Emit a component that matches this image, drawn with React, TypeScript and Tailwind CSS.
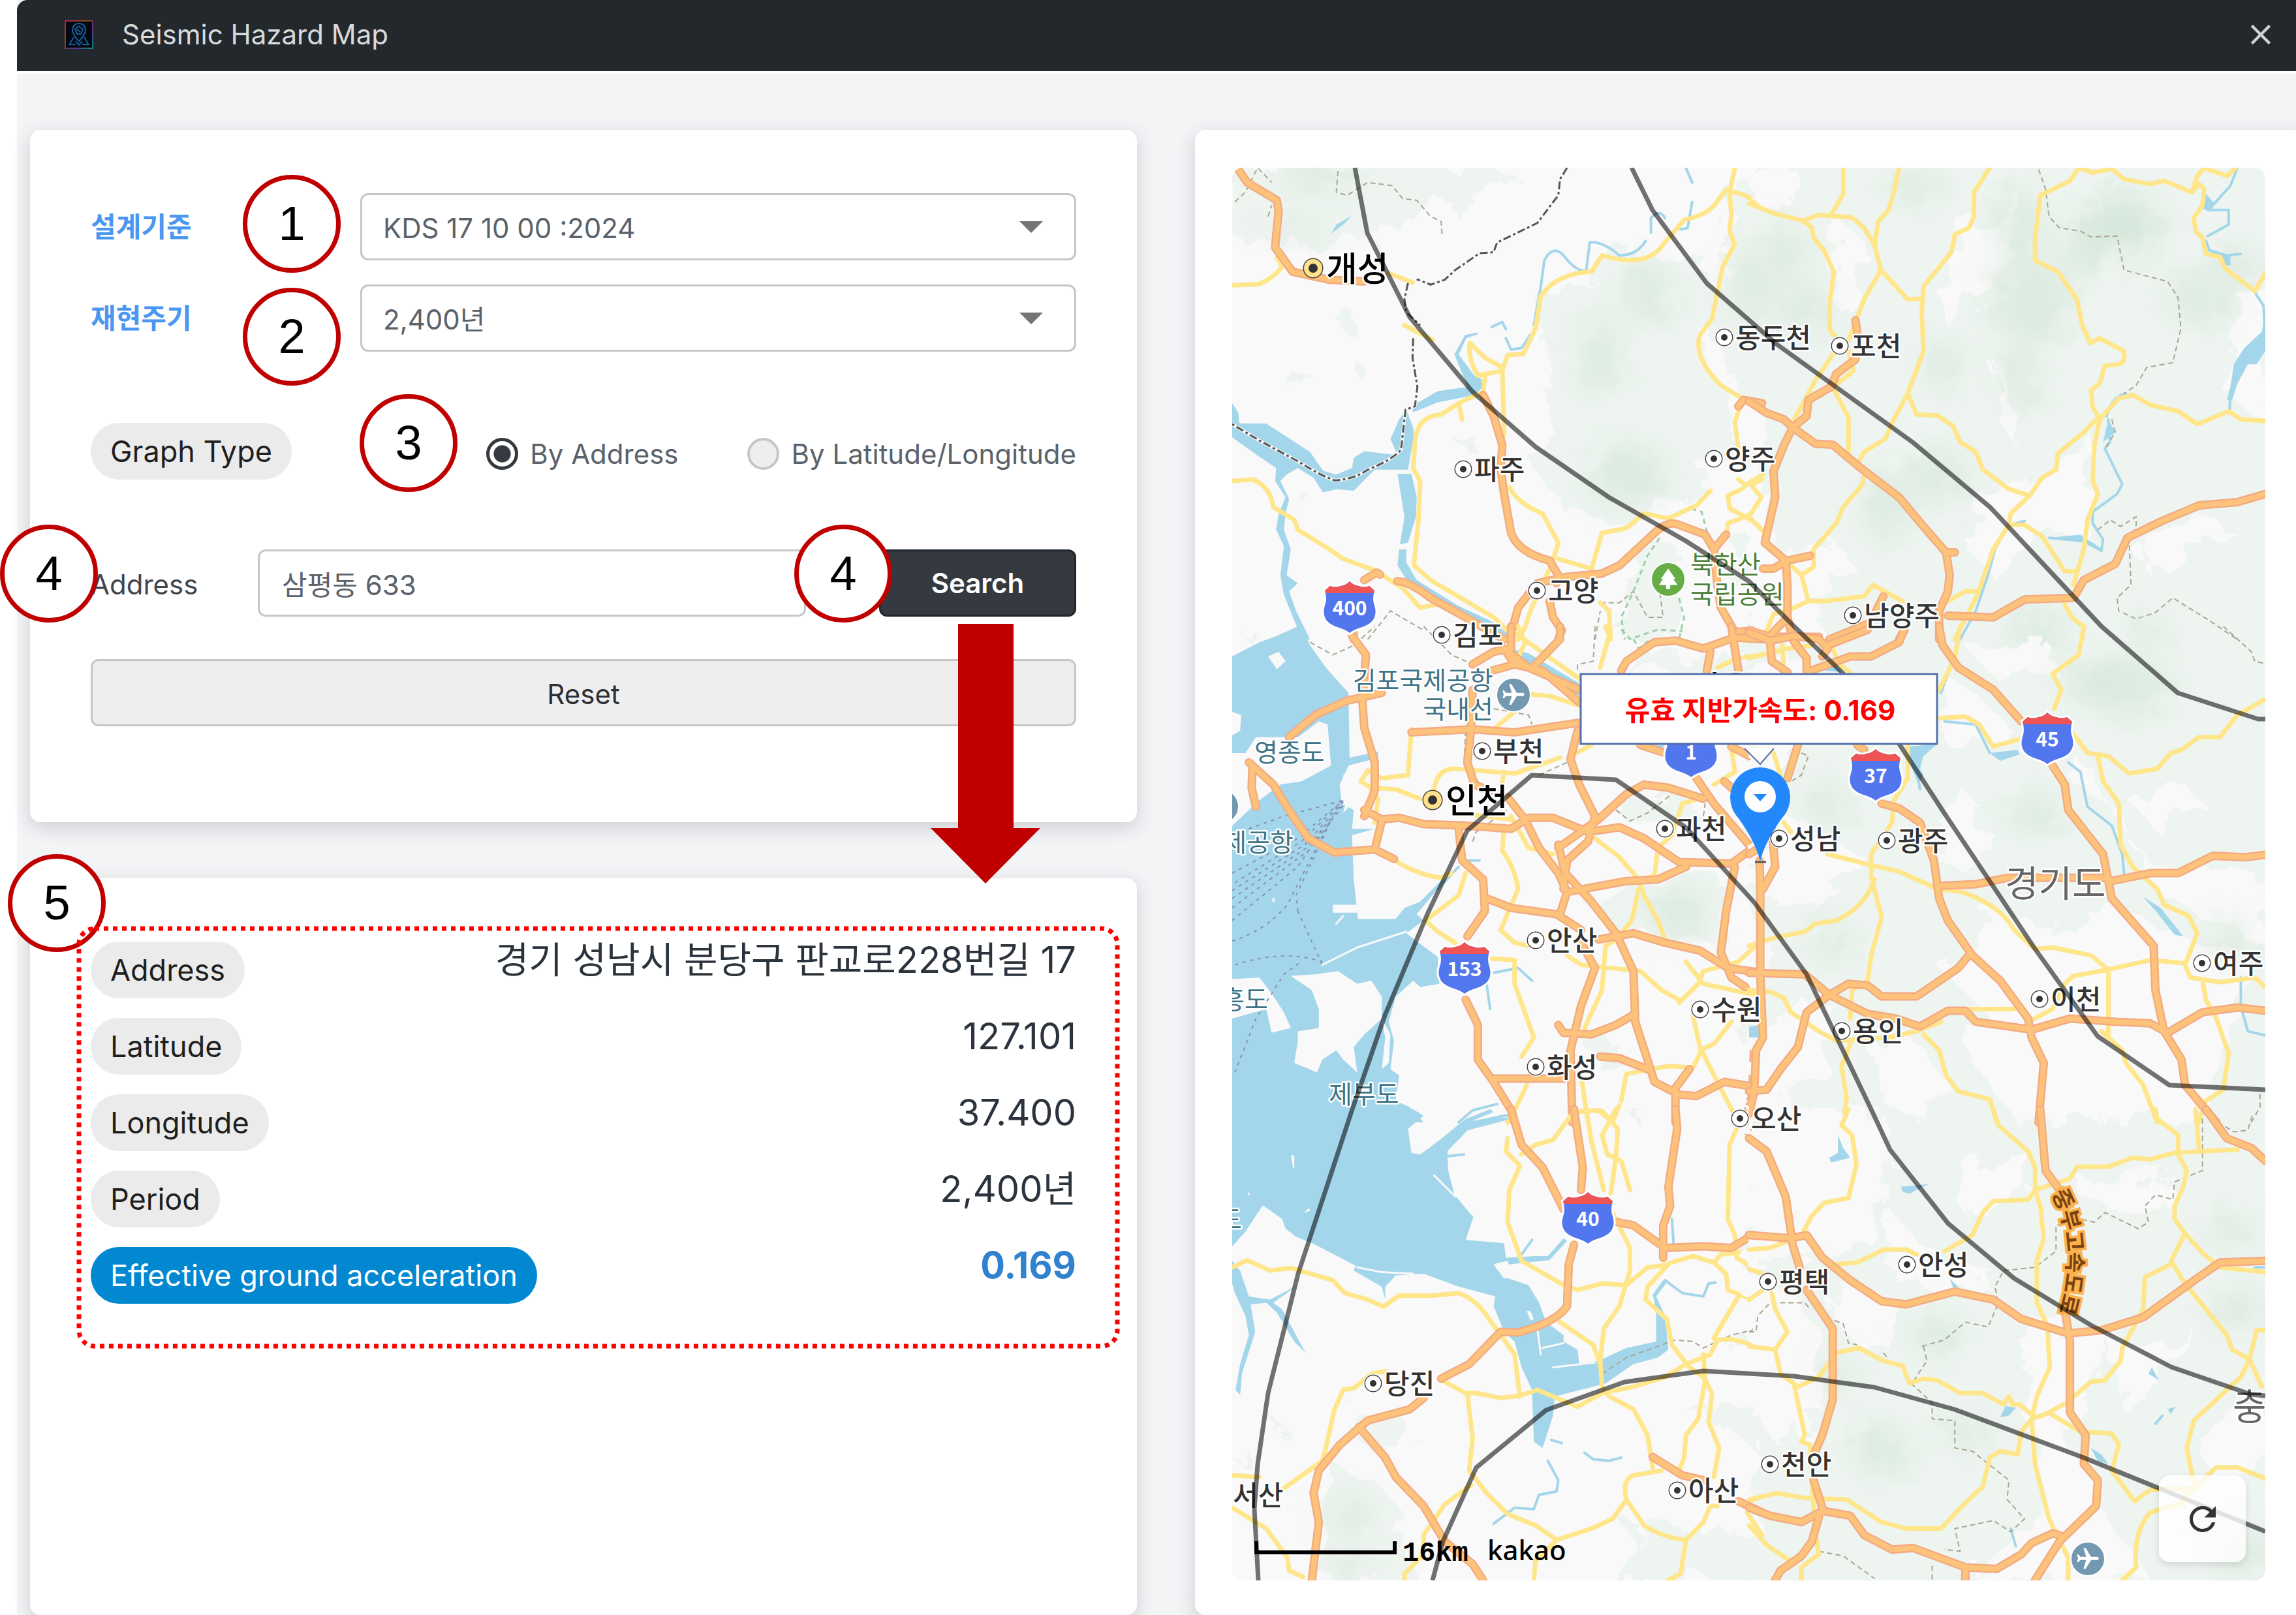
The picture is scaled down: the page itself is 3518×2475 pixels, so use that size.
import React, { useState } from 'react';
import { MdClose, MdFlight, MdPark, MdRefresh } from 'react-icons/md';

const SANS = "font-['Inter','Noto_Sans_CJK_KR',sans-serif]";

type TileData = {
  x: number;
  y: number;
  sx: number;
  sy: number;
  base?: string;
  green?: string;
  light?: string;
  hills?: number[][];
  water: string;
  land?: string;
  streams?: string;
  causeways?: string;
  ferries?: string;
  borders?: string;
  limits?: string;
  parks?: string;
  minor: string;
  major: string;
};

// Every tile is drawn on its own 1568 x 1568 grid
const TILES: TileData[] = [
  {
    x: -28,
    y: -57,
    sx: 0.5357,
    sy: 0.4974,
    green:
      'M52 115H850L800 200L640 230L600 270L480 290L440 330L330 350L180 340L52 330Z M920 510L1060 470L1170 360L1280 400L1400 380L1440 520L1390 700L1450 800L1500 950L1400 1080L1180 1200L1000 1170L900 1000L960 900L940 700Z M1500 115H1568V800L1480 760L1430 620Z M340 520L380 540V610L350 600Z M220 740L290 760L240 820Z M400 700L440 740L430 780L400 740Z M1200 1300L1330 1290L1340 1568H1170Z M1480 1230H1568V1500L1500 1400Z M690 960L760 950L740 990Z M240 1110L270 1120L260 1170Z',
    hills: [[310, 140, 110, 50], [1240, 500, 70, 90], [1180, 1060, 110, 100], [1100, 700, 60, 120], [1530, 480, 50, 120], [230, 310, 90, 30]],
    water:
      'M52 840L70 870L72 902L150 903L275 990L312 1048L350 1060L395 1040L400 1008L430 988L525 1000L505 950L530 890L550 860L570 915L572 940L555 1045L460 1045L400 1110L350 1105L312 1115L285 1070L240 1040L208 1060L190 1080L215 1135L205 1180L200 1230L220 1290L208 1370L240 1395L215 1420L235 1480L275 1568H190L245 1550L200 1430L190 1370L200 1280L178 1230L185 1180L205 1130L175 1080L178 1040L130 1005L52 945Z M570 868L640 838L745 815L770 790L765 765L745 755L700 690L722 640L755 628V622L718 630L688 690L725 790L640 803L565 850Z M525 1058H565L580 1130L578 1190L555 1270L532 1275L545 1190Z M530 1290H550V1330L580 1385L700 1465L800 1515L860 1568H815L700 1490L560 1400L525 1340Z M335 318L350 290L395 262L370 290Z',
    streams:
      'M795 605L825 590L835 612M835 640L850 675L880 670L905 630M915 600L935 480L945 400Q970 350 1000 385Q1040 440 1065 430L1075 345Q1110 340 1160 385Q1210 385 1235 340M1250 315V270Q1275 240 1290 270M1335 305L1355 300L1368 220M1350 115L1368 160',
    borders:
      'M1010 115L990 150L985 200L960 235L925 285L810 345L800 375L760 378L690 430L660 460L620 475L580 458M555 470L545 520L550 560L590 600M570 640L568 700L582 790L575 850L548 860L535 985Q500 1020 440 1045Q400 1075 345 1078Q300 1060 250 1025L130 955L52 905',
    limits:
      'M355 125L350 190L380 200L440 160L510 170L540 210L580 215L620 265L650 280L653 330M60 220L90 190L125 115L165 160M155 265L165 230M1105 1455L1160 1455L1200 1420L1240 1500L1285 1500L1275 1420M440 1568L505 1480L600 1540M1090 1568L1105 1480',
    parks: 'M1275 1255L1240 1310L1200 1420L1165 1500L1175 1568M1365 1165L1395 1175L1410 1235M1330 1440L1345 1500L1330 1568',
    minor:
      'M52 477L130 473Q170 455 195 420L180 390M500 440L568 468M545 600L625 645M52 1080L110 1075Q160 1095 170 1160L230 1200L240 1230L330 1290L370 1320L460 1355L540 1410L590 1470L640 1460M1568 230L1520 200L1465 183L1445 210Q1420 260 1345 275L1270 370Q1220 420 1110 385L1080 435Q980 440 935 510L920 610L885 688L840 692L825 740L755 755Q725 700 732 655L775 700L825 730M825 740L830 930L820 990M775 760L770 805L700 840L650 875Q580 880 575 960L570 1040L590 1080L585 1200L572 1340L620 1385L800 1500L840 1540M700 840L710 890M1490 115L1475 190L1480 260L1475 310L1490 350L1455 420L1440 500L1425 580L1390 630Q1370 700 1450 785L1510 825M1505 850L1490 900L1500 980M845 1100Q870 1150 940 1180L985 1270L965 1340L930 1420L905 1480L890 1530L870 1568M985 1320L1080 1350L1110 1240L1180 1225L1230 1180L1300 1195L1380 1155L1420 1110M1500 1075L1530 1100L1568 1130M1568 1075L1470 1125L1475 1165L1520 1190L1568 1230M1520 1190L1470 1210L1465 1250M1568 1160L1520 1190M1105 1455L1130 1480L1135 1568',
    major:
      'M70 120L95 160L180 215L185 250L175 360L225 435L330 460L430 465M770 815L800 880L825 970L820 1040L830 1120L850 1240Q870 1300 960 1325L985 1370L980 1395M430 1385L465 1362L475 1368M525 1388Q560 1390 620 1440L720 1500L830 1568M845 1568L870 1470L925 1395L1010 1375L1110 1365L1160 1340L1260 1240Q1300 1200 1330 1215L1405 1245L1430 1290L1465 1245M960 1450L970 1500L995 1540L985 1568M1430 1290L1440 1400L1450 1470L1490 1545L1568 1540M1500 850L1515 830L1568 840M400 1550V1568',
  },
  {
    x: 792,
    y: -57,
    sx: 0.5344,
    sy: 0.4974,
    base: '#eef4f0',
    light:
      'M0 115H130L90 200L60 250L0 200Z M240 260L330 340L300 480L250 560L240 400Z M0 980L40 1150L90 1300L230 1250L300 1350L200 1400V1568H0Z M640 1140L740 1090L900 1060L960 900L990 1000L960 1250L800 1230L720 1400L640 1300Z M1130 1230L1290 1190L1400 1240L1250 1330L1130 1360Z M640 300L800 200L700 480L560 600L520 480Z M1400 500L1480 480V900L1380 820Z M700 700L790 1000L720 900Z',
    hills: [[770, 300, 70, 130], [810, 530, 120, 120], [1070, 290, 120, 90], [1050, 270, 70, 60], [960, 370, 80, 70], [560, 720, 60, 70], [390, 1160, 60, 110], [540, 1070, 90, 80], [160, 550, 70, 80], [780, 760, 50, 110], [480, 170, 70, 60], [1290, 520, 90, 70], [1400, 420, 70, 60], [830, 1540, 90, 60], [100, 380, 60, 90]],
    water:
      'M1305 190L1335 225L1320 250L1300 240Z M1480 560L1470 620L1420 670L1390 720L1380 790L1370 830H1385L1400 780L1430 720L1455 720L1480 680Z M1320 365L1380 385V415H1360Z M860 1255L950 1245L1020 1295L960 1270Z M1015 960L1030 890L1050 930Z',
    streams:
      'M1400 115L1380 170L1330 230L1320 245H1375V290L1315 325M1310 340L1320 370L1370 385L1410 380M1445 490L1475 540L1478 600M1380 800L1378 860M1025 880Q1040 820 1080 810M1030 890L1035 960L1020 980L1070 1090L1055 1120L985 1175V1210L1015 1260L1010 1295L960 1265L860 1255M765 1210L790 1203M745 1215L705 1290L685 1370L650 1480L605 1568',
    limits:
      'M830 120L850 180L860 265L890 300L950 310L980 328L1055 325L1075 430L1200 465L1230 515L1238 610L1215 715L1140 730L1110 785L1075 810M1040 890L1050 930L1020 980M1000 1230L1035 1200L1065 1220L1110 1190V1215L1090 1270L1095 1400L1055 1440L1060 1480L1110 1505L1165 1485L1215 1440L1320 1510L1400 1568',
    minor:
      'M0 225L70 255L155 278L200 260L295 268L330 300L360 355L378 430L455 520L495 518M270 115V195L235 260M430 115L415 190L400 245L370 280L360 355M155 278L180 300L185 330L215 370L243 435L230 540L232 615L255 645L240 690L190 770L130 890M378 430L330 520L305 590L280 660L300 740L240 790L285 885V990M690 115L645 190V265L630 300L590 320L580 375L500 480L495 560L500 680L455 810L415 890L390 950L330 990L310 1030M455 810L480 875L540 878L585 910L605 960L650 990L670 1045L745 1105L805 1125M1000 885L960 930L885 995L880 1045L840 1070L805 1125L750 1180L745 1215L700 1290L655 1430L590 1568M945 115L920 155L835 200L820 330V400L885 435L940 520L955 600L978 655L1005 640L1075 680Q1080 715 1060 720L1020 725L1005 780L980 800L985 850L1005 890M945 115L985 130L1040 118L1075 150L1150 165L1190 155L1270 190L1290 165L1305 180L1300 230L1275 270L1280 310L1300 330L1310 380L1350 390L1365 425L1450 495L1480 440M1270 190L1285 140L1305 115L1370 140L1395 115M1005 890L1060 825L1100 815L1150 845L1230 865L1285 905L1375 865L1410 890L1480 895M1005 890L990 970L985 1080L1000 1120L970 1200L960 1290L930 1400M745 1215H790L840 1250L905 1358H935M905 1460L925 1500L960 1530L955 1568M330 1060L325 1090L270 1160L250 1210L185 1290V1345L150 1370L170 1450H220L330 1435L355 1400L440 1450M570 1450L620 1420H655M40 1060L0 1085L35 1130L0 1190L45 1240M170 1450L120 1475L70 1490L40 1568M105 1325L150 1370',
    major:
      'M0 835L50 870L100 890L125 915L190 965L240 968L320 1040L430 1130L500 1220L565 1300L575 1370L570 1420L545 1480V1568M305 585L310 620M305 705L250 750L235 790L170 830L165 880L125 915L100 970L70 1050L75 1130L60 1200L45 1270L105 1325L110 1400V1500L50 1568M40 1350H70L110 1325L175 1310M110 1500L125 1568M570 1300H590M570 1495L700 1500L790 1445L930 1440L960 1385L1050 1335L1085 1255L1180 1205L1290 1155L1400 1145L1480 1120M0 1540L60 1560H200M230 1568L340 1520M360 1490L385 1435M430 1568L445 1540',
  },
  {
    x: -28,
    y: 703,
    sx: 0.5357,
    sy: 0.4847,
    green:
      'M1150 580L1330 520L1420 640L1300 640L1180 620Z M1050 860L1300 810L1470 780L1450 1000L1300 980L1100 920Z M1200 80L1400 90L1560 100L1550 145H1180Z M1070 1320L1150 1310L1180 1390L1080 1380Z M70 20L140 20L110 60Z M1500 820H1568V900Z',
    hills: [[1330, 900, 90, 80]],
    water:
      'M52 95L130 50L180 30L240 0H250L275 60L320 130L385 210L388 415L470 395V415L385 440L360 500L365 560L400 580L395 640H460L395 660L400 800L412 925H520L545 890L590 870L680 770L640 830L580 910L600 930L550 970L640 1045L645 1130L590 1140L570 1120L540 1150L520 1170L500 1250L515 1310L505 1400L530 1420L520 1500L560 1520L600 1568H52Z M850 70L900 85L1045 180V220L880 100Z M1540 1265L1568 1260V1300L1545 1305Z M1240 375H1290L1280 390Z',
    land:
      'M52 400L90 400L120 350L240 350L300 300L325 310L335 440L250 490L190 500L130 550L52 630Z M52 270L78 280L75 330L52 345Z M340 880H412V905H340Z M290 1100L355 1090L410 1130L450 1120L480 1170V1240L430 1290L400 1330L410 1410L370 1370L350 1340L310 1370L295 1410L230 1380L240 1310V1280L300 1270V1210L280 1150L220 1105Z M52 1115L130 1110L165 1160L200 1220L220 1270L165 1285L150 1210L100 1225L52 1240Z M155 95L185 80L205 110L180 135Z M370 470L420 440L400 510L410 540L370 590L380 540Z M165 865L175 855L172 875Z M480 1240L505 1290L500 1380L480 1400L490 1300Z',
    streams: 'M640 830L700 760M730 740H760M800 1095L870 1080L910 1120M780 1130L790 1210M700 1568L740 1530L810 1510M740 1568L840 1545',
    causeways: 'M310 1070L410 1015L550 965M350 940L370 915',
    ferries:
      'M52 780L240 670L370 550M60 810L250 680L370 550M52 835L260 690L370 555M52 860L265 700L370 560M52 890L275 705L370 565M52 930L240 760L330 610M100 640L200 600L370 550M52 995Q150 960 210 880Q270 750 330 620M60 1070Q200 1020 310 1060M240 900L235 850L290 720L340 600M240 900L310 1070M60 1410L120 1240L200 1100L250 1060',
    limits:
      'M275 50L340 90L400 60L460 0M600 0L680 90L740 120M1090 0L1085 110L1040 120V145M740 680L750 650L840 580M800 260L900 280L910 310M930 470L1010 430M1150 580L1190 615L1240 590L1310 530M1400 600L1405 560M750 480L760 500M720 330L715 440',
    parks: 'M1165 10L1190 40L1270 10L1340 15M1200 40L1215 70L1250 40',
    minor:
      'M565 325L555 470L480 480L440 455L420 490L450 510L520 515L590 545M450 520L470 545L460 620M630 520Q635 450 690 450L860 465L990 415M830 460L820 520M510 735Q580 785 650 795L680 780M720 780L700 850L605 930L640 965L690 1000M830 630L825 710Q860 760 870 830L820 960L860 1000L900 1010M1010 1040L1050 1070L1220 1090L1280 1150L1330 1180M850 600L900 700L970 720M790 1050L860 1055V1130L915 1300L880 1360M1090 670L1160 730L1215 800L1230 850L1270 930L1290 990M1215 830L1195 930L1150 990L1120 1010L1110 1150L1060 1270M1215 800L1260 790L1270 700L1310 660L1340 560L1400 540M1568 990L1500 1060L1400 1090L1385 1130L1330 1190M1350 1060L1400 1130L1568 1170M1370 1230L1390 1330L1440 1440L1500 1568M1390 1340L1430 1320L1480 1250M1250 1400L1300 1390L1370 1395L1395 1340M1250 1400L1180 1415L1165 1500L1140 1568M1050 1420L1070 1568M1040 1535L1100 1530L1140 1568M895 1450L860 1530L840 1568M910 215L960 220L1045 250M860 270L810 315M1120 0L1130 30L1105 130M870 0L890 50L870 100M1440 130L1500 100L1568 90M1430 500L1490 460L1480 380M1020 410L1080 375M700 590L850 610M860 20L1045 165',
    major:
      'M395 30L435 90L425 240L430 320L460 430V520L430 600M215 350L290 280L380 235L480 210M100 430L120 450L170 500L220 590L270 670L345 715L460 705L515 735M110 450L108 510L120 570M430 580L480 610L530 605L600 625L720 630L850 640L900 605L970 605L1070 650L1160 635L1230 670L1330 745L1480 750L1568 680M480 615L460 705M565 335L740 325L860 335L1040 305M740 200L735 330L725 430L745 500L790 520M840 540L890 610L930 700L985 780L1010 840M700 640L710 740L770 800L775 900L725 980M780 860L850 890L980 910L1050 960M1010 840L990 910M1010 840L1180 805L1270 800L1350 760M1040 330L1020 420L1045 500L1090 600L1070 680L1010 740L1000 830M985 700L1100 610L1180 530L1230 500L1300 510L1400 545M985 690L1005 780L1080 870L1150 970L1200 1090L1205 1250L1240 1370L1260 1440L1330 1480L1380 1485L1460 1440L1568 1460M1100 990L1200 970L1290 1000L1390 1025L1470 1080L1568 1095M1490 760L1465 900L1450 1030L1480 1110L1520 1140M1050 1000L1090 1080L1050 1200L1020 1340L1025 1568M985 1260L1000 1285L1080 1290L1150 1260L1205 1225M720 1180L755 1260V1370L800 1440L850 1530L860 1568M800 1430H1000M1105 1360L1160 1365L1240 1400M1360 1400L1320 1460V1568M1520 1568L1540 1480L1545 1330L1568 1280M1380 480L1430 560L1530 690M1460 490L1530 560M1220 375L1290 400M740 120L800 80L850 70V0M795 140L860 120L830 70M860 120L940 140L1045 240M830 70L900 130L1045 200M920 120L990 40V0M1165 140L1180 110L1260 50L1320 45L1400 70L1490 35L1568 40M1480 0L1500 140M1420 80L1410 140M1480 380L1568 430',
  },
  {
    x: 792,
    y: 703,
    sx: 0.5344,
    sy: 0.4847,
    base: '#eef4f0',
    light:
      'M0 100H170L140 380L60 560L200 640L340 740L240 850L60 860L0 700Z M560 150L700 260L760 340L600 400L540 340Z M620 60L840 30L860 130L700 160Z M850 960L1050 880L1300 1000L1440 1060L1400 1200L1300 1568H760L600 1300L700 1250L560 1090L700 900Z M930 500L1040 560L1180 860L1280 900L1480 1000V780L1160 760L1040 600L960 420Z M90 1240L240 1180L220 1400L60 1568H0V1300Z M340 1330L480 1300L560 1450L480 1568L380 1500Z M550 560L640 540L700 720L560 780Z M1100 560L1250 500L1300 560L1160 640Z',
    hills: [[1080, 190, 130, 90], [960, 160, 60, 60], [820, 590, 80, 60], [220, 560, 60, 60], [1150, 20, 60, 40], [1380, 1000, 50, 80], [240, 1000, 60, 60]],
    water:
      'M455 380L540 372L500 410L490 450L500 470L485 500L465 440Z M690 400L770 390L775 405L720 425Z M1130 855L1180 890L1245 980L1220 975L1170 905Z M180 135L240 105L265 145Z M0 1265L30 1260V1300H0Z',
    streams: 'M605 10L590 90L550 210M560 300L650 310L690 400M485 480L490 515M915 430L950 460L970 570L1040 630L1070 720L1075 780M1410 1110V1200L1430 1280L1480 1293',
    limits: 'M1360 0L1440 80L1450 110L1480 118M150 400L170 410L150 470L120 490M1440 1568L1465 1520V1470M1290 1568L1300 1540',
    minor:
      'M0 100L110 70L180 60M95 60L100 145M235 60L260 120L290 145M605 0L590 100L545 200M960 0L945 90L870 150L895 200L875 260M545 290L620 285L660 310L700 380L780 355M1480 230L1400 280L1350 350H1290L1240 390L1210 400L1170 450L1090 465L1030 410L970 400L930 340M1000 410L1015 490L1060 560L1065 690L1100 760L1170 830L1190 880L1260 915L1285 970L1250 1070L1265 1110L1350 1125L1450 1110L1480 1140M1300 1120L1310 1180L1340 1240L1375 1350L1360 1465L1310 1500L1290 1568M455 380V480L415 550L410 620L350 720V790L380 920L350 1040L340 1120L295 1150L290 1240M70 400L90 470M100 620L120 650M225 720L350 755L430 775L540 830L610 840Q720 880 760 960L820 1020L870 1015L980 1040L1030 1085V1300M360 800Q330 890 250 930L190 940L160 965L70 985L0 1010M810 1245L870 1210L905 1130L930 1105L1030 1085L1150 1055L1250 1065M760 1210H620M0 1150L60 1155L100 1175L120 1220L200 1280L250 1310L400 1300L480 1280L550 1250M500 1290L545 1340L565 1420L600 1470L690 1495L710 1568M290 1320L265 1390L280 1490L270 1568M1010 1280L1070 1340L1080 1380L1130 1450L1170 1568',
    major:
      'M0 20L60 45L130 30L200 40L225 70L210 95M225 60L340 10M60 45L65 110L110 145M130 50L165 100V145L290 95H350L430 50L445 10M545 0L555 60L600 130L700 200L780 300M870 440L905 500L915 580L1015 720L1040 860L1160 1010L1165 1150L1190 1280L1240 1370L1250 1450L1340 1568M380 560L430 575L490 620L530 740L545 860L570 930L640 1040L720 1120L800 1240L810 1300L845 1380L830 1568M550 820L650 815L740 795H1030M1040 805L1150 780H1230L1330 725L1420 730L1480 722M0 1095L160 1100L230 1165L340 1225L420 1240L490 1265L570 1215H620L650 1250L810 1275L920 1240L1050 1250L1150 1255L1200 1285L1300 1220L1400 1205L1480 1215M630 1040L600 1080L480 1170H380L340 1135L285 1130L230 1165L165 1220L140 1330L90 1400L50 1465L0 1470M30 740L32 820V1100L40 1300L20 1340L15 1470L0 1540M140 375L110 480M65 640L75 760L40 830M310 375L330 390M0 720L30 700',
  },
  {
    x: -28,
    y: 1443,
    sx: 0.5357,
    sy: 0.4943,
    green:
      'M420 930L560 960V1040L480 1080L380 1000Z M340 1100L460 1150L540 1250L560 1460H300L320 1200Z M1250 1300L1568 1310V1460H1150Z M1340 930H1568V1080L1450 960Z M60 1090L130 1080L120 1130Z M1150 1250L1230 1300L1200 1360Z M170 960L200 980L170 1000Z M1180 0H1220L1210 50Z',
    hills: [[390, 1420, 50, 60], [390, 1260, 60, 60]],
    water:
      'M52 0H570L600 20L555 60L565 135L590 140L640 100L720 30L790 0L800 8L740 35L840 25V33L725 65L668 130L670 190L688 265L742 335L720 405L830 415L835 460L920 455H955L1000 400L1010 408L960 468L850 480L805 490L830 520L900 545L930 600L950 660L1000 700V720L1040 745L1045 790L1100 780L1180 740L1265 720V620L1255 575L1285 530H1300L1265 580L1290 640L1300 745L1270 770L1200 790L1120 850L975 890L970 950L940 1050L915 1030L910 870L880 800L860 720L830 690L800 610L805 580L700 550L600 510L520 515L490 550V590L480 550L400 500L405 485L370 465L290 420L235 395L205 370L195 340L140 298L120 330L90 380L52 425Z M52 470L75 500L100 580L160 590L240 545L170 600L195 620L262 755L230 720L180 630L150 600L105 605L118 690L80 820L75 885L62 870L75 790L100 700L90 640L60 570L52 540Z',
    land: 'M220 140L230 145V185L226 180Z M258 320L272 305L275 315Z M97 255L103 262L98 268Z M895 625L905 625L915 650L905 655Z M800 480L840 470L850 500L890 510L900 545L860 520L830 525Z',
    streams:
      'M1290 530L1340 570L1400 580L1415 540L1435 537M955 1090L985 1150L980 1185L930 1195L915 1240L860 1235L800 1285M1060 1065L1085 1085L1130 1090L1165 1080M965 1025L995 1035M1310 340L1315 420M880 450L910 405M670 145L715 140',
    causeways: 'M925 680L935 760M970 800L1090 785M940 740L1000 725M410 490L480 505L570 510M630 205L690 270',
    limits: 'M1110 820L1180 770L1320 715L1370 720L1400 740L1480 700L1540 685L1560 640',
    minor:
      'M52 490L95 468L160 500L220 492L340 530L375 570L440 590L485 612L530 577L620 578L700 570Q750 590 780 640L860 760L875 890M52 1135L130 1140M200 1175L310 1090L320 1050L345 930L370 870L400 865L450 820L490 812M52 1235L150 1300L210 1390L215 1430L255 1450M660 845L720 880L750 880L820 895L875 888L925 870L1040 922L1110 880L1200 860L1290 830L1350 790L1420 760L1440 715L1480 712L1568 740M725 885L740 1020L730 1120L780 1190L840 1255L920 1290L980 1335L1080 1300L1140 1270L1180 1210L1230 1290Q1290 1330 1350 1335L1400 1280L1420 1230H1440M1180 1210Q1165 1150 1200 1135L1280 1120M735 1165L660 1225L600 1320V1380L545 1440V1460M980 1335L920 1400L915 1460M1350 1335L1335 1440L1300 1460M840 90L835 130L875 175L845 250L840 350L880 470L1000 545L1040 560L1110 540L1180 545L1240 490L1280 485L1370 455L1430 475L1465 510L1470 560L1540 590L1568 575M880 140L920 110L970 95L1020 20L1050 5H1110L1155 60L1150 150L1135 260M1065 0L1080 100L1115 250M1150 0L1110 80L1125 140L1165 160L1190 250M1140 320L1190 430V500L1160 610L1115 680L1105 780L1110 860L1130 890L1200 930L1240 1010L1255 1110M990 660L1085 730L1105 790M1300 480L1240 550L1235 590L1295 650L1310 730L1360 800L1400 830L1425 880L1415 970L1445 1050L1430 1140M1400 760L1405 840L1385 960L1350 1010L1345 1080L1330 1120M1500 580L1430 710M1495 60L1475 110L1470 340L1490 390L1495 460L1568 510M1430 475L1450 450L1568 435M1525 1250L1568 1320M1520 1220L1568 1200',
    major:
      'M850 0L880 110L940 180L1000 310M1030 0L1055 180L1050 250M1155 350L1200 360L1290 430L1400 425L1480 430L1540 390L1568 395M1320 0L1325 60L1300 240L1305 300L1285 360V460M1030 420L1015 480L1010 610Q980 660 870 692L820 690L730 790L650 835M600 895L560 930L440 965L360 1040L300 1120L285 1190L300 1280L280 1460M415 985L490 1080L520 1140L600 1230L660 1340L740 1410L770 1460M1255 1078L1340 1135L1400 1150M1500 1215L1568 1250M1520 60L1568 120',
  },
  {
    x: 792,
    y: 1443,
    sx: 0.5344,
    sy: 0.4943,
    base: '#eef4f0',
    light:
      'M0 0H380L420 180L350 400L240 450L0 500Z M260 500L430 600L400 740L300 740L250 640Z M0 520L120 560L200 700L180 1000L100 1060L0 940Z M800 640L1060 700L950 900L900 1000L1050 1300L1150 1460H640L700 1400L850 1250L820 1000Z M620 180L800 140L820 260L700 270L640 360Z M950 220L1200 180L1180 260L1120 320L980 300Z M400 300L480 420L700 500L640 560L420 540Z M1050 720L1300 700L1200 820L1080 940Z M1280 1000L1480 900V1100L1300 1120Z',
    hills: [[540, 700, 80, 60], [380, 1060, 80, 80], [250, 820, 50, 50], [1400, 620, 80, 60], [1420, 1380, 70, 70], [620, 1000, 60, 50], [1380, 380, 70, 50]],
    water:
      'M255 80L270 120L290 150L235 165L230 150L255 135Z M435 240L515 232L480 250L460 262L440 255Z M720 955L735 920L765 925L745 950Z M980 1050L1010 1070L1030 1100L1000 1090Z M1145 820L1155 800L1175 840Z M1200 930L1222 922L1210 945Z M575 525L602 553H585Z',
    streams: 'M1165 975L1185 950M750 1300L765 1355M1450 490H1480',
    limits:
      'M245 655L270 665L285 725L310 730M385 755L400 775M465 850L525 910V960L590 965V1050L640 1060L745 1150L740 1210L790 1270L750 1310L700 1275L590 1300L605 1370L560 1365M500 735L510 780L470 845M495 735L560 715L620 660L685 675L715 600L705 550L730 500L820 490L880 440V360L950 340L990 350L1020 320L1115 370L1145 350L1135 300L1165 265L1215 280L1220 225L1300 190V20M0 690L20 690L25 640L60 600H160L175 620M200 1370L270 1385L360 1455M525 1415V1460M1345 40L1390 70L1430 65L1445 10',
    minor:
      'M285 0L265 50L295 80L308 170L285 275L215 290L180 330L155 380M0 435L60 430L120 405M0 495L40 510M0 590L40 560M65 570L75 620L110 690L75 745L0 735M75 745L90 820L140 860L200 830L250 755L315 740L385 780L440 795L460 850L500 835L540 840L605 880L670 880L730 915L745 890L755 915H775L820 955M130 860L160 1010L150 1030L175 1040L185 1240M255 480L310 475L385 435H450L480 450M560 440L640 390L670 320L700 285L800 280L820 250L920 215L940 178H1030L1100 150L1150 155L1220 135L1300 130L1400 125M700 0L715 50L800 130L820 180V250L835 300L845 400L825 470V600L855 670L862 800L825 890L810 960L820 1100L860 1270L915 1390V1460M1165 0L1170 30L1230 80V140L1255 190L1245 240L1220 300V340L1250 385L1300 445L1350 490L1480 505M1280 0L1290 120M1250 385L1210 470L1250 540L1370 700L1385 745L1435 775L1455 685H1480M1435 775L1470 860M1435 775L1410 830L1340 900L1275 965L1255 1050L1275 1160M1210 480L1135 520L1130 620L1070 740L1065 780L1020 840L980 845L910 910L850 945L810 960L780 1000L770 1070L720 1060L690 1080L670 1170L620 1220L550 1300H450L380 1280L280 1210L160 1205L80 1190L0 1210M865 945L950 1000L1040 1005L1060 1040L1040 1120L1105 1215L1150 1180L1275 1175L1340 1110H1400L1480 1145M1275 1175L1240 1220L1150 1250Q1100 1310 1110 1420L1070 1460M185 1280L200 1380L150 1420V1460M0 1290L50 1350L130 1410',
    major:
      'M0 90L50 130L105 270L125 420L145 490M0 390L120 400L165 390L210 460L290 530L380 595L450 605L590 565L700 590L780 650L915 695L1010 685L1130 645L1200 590L1290 520L1350 475L1480 470M165 560L240 680V900L210 1010L190 1060M185 1150L210 1235M0 1235L60 1260L150 1280L210 1245L290 1260L330 1320L410 1365L470 1360L620 1420L710 1425L780 1380L810 1345L870 1315L890 1320M200 1265L180 1340L150 1385L90 1430L75 1460M620 1420V1460M835 0L850 190L890 250M905 620L920 720V940L965 1010L960 1100L1000 1150L995 1230L890 1340L820 1460M1310 0L1370 90L1440 120L1480 160',
  },
];

const CONTOURS = [
  'M188 0L207 100L272 229L368 343L465 428L577 505L695 572L792 634L861 703L936 775L1022 883L1091 989L1230 1197L1326 1331L1436 1406L1583 1413',
  'M612 0L644 65L727 177L835 271L1043 421L1161 520L1332 703L1449 805L1572 845H1583',
  'M40 2165L34 2056L39 1987L55 1878L101 1695L184 1443L234 1299L299 1144L360 1016L459 931L588 938L695 1011L800 1126L880 1236L979 1443L1008 1505L1097 1618L1198 1702L1316 1774L1439 1838L1561 1880L1583 1882',
  'M307 2165L323 2105L374 1992L481 1904L601 1861L722 1844L861 1852L984 1869L1107 1903L1305 1977L1583 2090',
];

const CITIES: [string, number, number][] = [
  ['동두천', 754, 260], ['포천', 931, 273], ['파주', 354, 462], ['양주', 738, 446],
  ['고양', 467, 648], ['남양주', 951, 686], ['김포', 321, 716], ['부천', 383, 894],
  ['과천', 663, 1013], ['성남', 838, 1028], ['광주', 1003, 1031], ['안산', 465, 1184],
  ['수원', 717, 1290], ['화성', 465, 1378], ['용인', 934, 1323], ['이천', 1237, 1274],
  ['여주', 1486, 1219], ['오산', 778, 1457], ['안성', 1034, 1681], ['평택', 821, 1707],
  ['천안', 824, 1987], ['당진', 216, 1863], ['아산', 682, 2027],
];

const SHIELDS: [string, number, number][] = [
  ['400', 180, 673], ['153', 356, 1226], ['1', 703, 894],
  ['37', 986, 930], ['45', 1249, 874], ['40', 545, 1609],
];

const RESULTS = [
  { label: 'Address', value: '경기 성남시 분당구 판교로228번길 17' },
  { label: 'Latitude', value: '127.101' },
  { label: 'Longitude', value: '37.400' },
  { label: 'Period', value: '2,400년' },
];

const Tile: React.FC<{ tile: TileData }> = ({ tile }) => (
  <g transform={`translate(${tile.x} ${tile.y}) scale(${tile.sx} ${tile.sy})`} fill="none" strokeLinecap="round" strokeLinejoin="round">
    {tile.green && <path d={tile.green} fill="#eef4f0" filter="url(#ragged)" />}
    {tile.light && <path d={tile.light} fill="#f9f9f9" filter="url(#ragged)" />}
    {tile.hills?.map(([cx, cy, rx, ry]) => (
      <ellipse key={`${cx}-${cy}`} cx={cx} cy={cy} rx={rx} ry={ry} fill="#cfe4d5" opacity="0.55" filter="url(#soft)" />
    ))}
    <path d={tile.water} fill="#a3d6ea" />
    {tile.land && <path d={tile.land} fill="#f9f9f9" />}
    <g className="[&>path]:[vector-effect:non-scaling-stroke]">
      <path d={tile.streams} stroke="#a3d6ea" strokeWidth="4" />
      <path d={tile.causeways} stroke="#f9f9f9" strokeWidth="3" />
      <path d={tile.ferries} stroke="#8790b0" strokeWidth="2" strokeDasharray="5 7" strokeLinecap="butt" />
      <path d={tile.limits} stroke="#aaa592" strokeWidth="2" strokeDasharray="8 5" strokeLinecap="butt" />
      <path d={tile.parks} stroke="#9ccfac" strokeWidth="3" strokeDasharray="8 6" strokeLinecap="butt" />
      <path d={tile.borders} stroke="#f9f9f9" strokeWidth="5" strokeLinecap="butt" />
      <path d={tile.borders} stroke="#555555" strokeWidth="3" strokeDasharray="12 4 4 4" strokeLinecap="butt" />
      <path d={tile.minor} stroke="#ffe68a" strokeWidth="7" />
      <path d={tile.major} stroke="#f3ab83" strokeWidth="13" />
      <path d={tile.major} stroke="#fdc37b" strokeWidth="8" />
    </g>
  </g>
);

const Shield: React.FC<{ no: string; x: number; y: number }> = ({ no, x, y }) => (
  <g transform={`translate(${x} ${y})`}>
    <path
      d="M-38 -25L-30 -32Q-22 -29 -14 -32Q-6 -33 0 -39Q6 -33 14 -32Q22 -29 30 -32L38 -25Q34 -12 38 -2Q42 10 36 20Q30 28 16 32Q6 35 0 40Q-6 35 -16 32Q-30 28 -36 20Q-42 10 -38 -2Q-34 -12 -38 -25Z"
      fill="#5276ee"
      stroke="#ffffff"
      strokeWidth="6"
      className="[paint-order:stroke]"
    />
    <path d="M-38 -25L-30 -32Q-22 -29 -14 -32Q-6 -33 0 -39Q6 -33 14 -32Q22 -29 30 -32L38 -25L36 -21H-36Z" fill="#ee5454" />
    <text y="13" textAnchor="middle" className="fill-white text-[30px] font-bold">{no}</text>
  </g>
);

const Badge: React.FC<{ x: number; y: number; color: string; children: React.ReactNode }> = ({ x, y, color, children }) => (
  <g transform={`translate(${x} ${y})`}>
    <circle r="26" fill={color} stroke="#ffffff" strokeWidth="2" />
    {children}
  </g>
);

const HazardMap: React.FC = () => (
  <div className="relative overflow-hidden rounded-2xl">
    <svg
      viewBox="0 0 1583 2165"
      className="block h-auto w-full bg-[#f9f9f9] font-['Noto_Sans_CJK_KR',sans-serif]"
      role="img"
      aria-label="Hazard map"
    >
      <defs>
        <filter id="ragged" x="-10%" y="-10%" width="120%" height="120%">
          <feTurbulence type="fractalNoise" baseFrequency="0.012" numOctaves="4" seed="4" />
          <feDisplacementMap in="SourceGraphic" scale="130" />
        </filter>
        <filter id="soft" x="-80%" y="-80%" width="260%" height="260%">
          <feGaussianBlur in="SourceGraphic" stdDeviation="40" result="blur" />
          <feTurbulence type="fractalNoise" baseFrequency="0.015" numOctaves="3" seed="9" result="noise" />
          <feDisplacementMap in="blur" in2="noise" scale="100" />
        </filter>
      </defs>
      {TILES.filter((tile) => tile.base).map((tile) => (
        <rect key={tile.y} x={tile.x + 8} y={tile.y} width="830" height="780" fill={tile.base} filter="url(#ragged)" />
      ))}
      {TILES.map((tile) => (
        <Tile key={`${tile.x},${tile.y}`} tile={tile} />
      ))}

      <g className="fill-[#333333] stroke-white [paint-order:stroke]" strokeWidth="5" strokeLinejoin="round">
        {CITIES.map(([name, x, y]) => (
          <g key={name}>
            <circle cx={x} cy={y} r="11" fill="#ffffff" stroke="#ffffff" strokeWidth="8" />
            <circle cx={x} cy={y} r="12" fill="#ffffff" stroke="#444444" strokeWidth="3" />
            <circle cx={x} cy={y} r="5" fill="#333333" stroke="none" />
            <text x={x + 17} y={y + 16} className="text-[42px] font-medium">{name}</text>
          </g>
        ))}
        <text x="1" y="2050" className="text-[42px] font-medium">서산</text>
        {[{ name: '개성', x: 124, y: 154 }, { name: '인천', x: 307, y: 969 }].map(({ name, x, y }) => (
          <g key={name}>
            <circle cx={x} cy={y} r="14" fill="#ffe28a" stroke="#444444" strokeWidth="3" />
            <circle cx={x} cy={y} r="7" fill="#333333" stroke="none" />
            <text x={x + 20} y={y + 20} className="fill-black text-[52px] font-medium">{name}</text>
          </g>
        ))}
        <text x="700" y="817" className="fill-black text-[52px] font-medium">서울</text>
        <g className="fill-[#666666] text-[56px]">
          <text x="1184" y="1117">경기도</text>
          <text x="1533" y="1919">충</text>
        </g>
        <g className="fill-[#3f7488] text-[39px]">
          <text x="34" y="910">영종도</text>
          <text x="148" y="1434">제부도</text>
          <text x="400" y="800" textAnchor="end">김포국제공항</text>
          <text x="400" y="844" textAnchor="end">국내선</text>
          <text x="94" y="1048" textAnchor="end">제공항</text>
          <text x="55" y="1289" textAnchor="end">흥도</text>
          <text x="15" y="1626" textAnchor="end">도</text>
        </g>
        <g className="fill-[#4d8038] text-[39px]">
          <text x="702" y="622">북한산</text>
          <text x="702" y="668">국립공원</text>
        </g>
      </g>
      <path id="expressway" d="M1255 1572Q1300 1650 1262 1770" fill="none" />
      <text className="fill-[#7a4410] stroke-[#fdb04c] text-[34px] font-bold [paint-order:stroke]" strokeWidth="8">
        <textPath href="#expressway">중부고속도로</textPath>
      </text>

      <Badge x={668} y={631} color="#67ad45">
        <MdPark x={-19} y={-20} size={38} color="#ffffff" />
      </Badge>
      <Badge x={431} y={808} color="#7299b0">
        <g transform="rotate(90)"><MdFlight x={-20} y={-20} size={40} color="#ffffff" /></g>
      </Badge>
      <Badge x={-16} y={979} color="#7299b0">{null}</Badge>
      <Badge x={1311} y={2132} color="#7299b0">
        <g transform="rotate(90)"><MdFlight x={-20} y={-20} size={40} color="#ffffff" /></g>
      </Badge>
      {SHIELDS.map(([no, x, y]) => (
        <Shield key={no} no={no} x={x} y={y} />
      ))}

      <path d={CONTOURS.join('')} fill="none" stroke="#000000" strokeOpacity="0.55" strokeWidth="7" strokeLinejoin="round" />

      <path d="M37 2105V2122H249V2105" fill="none" stroke="#000000" strokeWidth="6" />
      <text x="261" y="2135" className="font-['Liberation_Mono',monospace] text-[42px] font-bold">16km</text>
      <text x="391" y="2134" className="font-['Noto_Sans',sans-serif] text-[42px] font-medium">kakao</text>

      <path d="M785 890L809 914L830 890" fill="#ffffff" stroke="#5570a8" strokeWidth="2" />
      <path d="M809 1063Q802 1033 775 996A46 46 0 1 1 843 996Q816 1033 809 1063Z" fill="#2288fb" />
      <path d="M801 1064H818" stroke="#555555" strokeWidth="3" />
      <circle cx="809" cy="964" r="24" fill="#ffffff" />
      <path d="M799 960H819L809 971Z" fill="#2288fb" />
      <rect x="534" y="776" width="546" height="107" fill="#ffffff" stroke="#5570a8" strokeWidth="3" />
      <text x="809" y="847" textAnchor="middle" className="fill-[#ff0000] font-['Inter','Noto_Sans_CJK_KR',sans-serif] text-[42px] font-bold">
        유효 지반가속도: 0.169
      </text>
    </svg>
    <button
      type="button"
      aria-label="Refresh map"
      className="absolute right-[30px] bottom-7 flex size-[133px] items-center justify-center rounded-2xl bg-white/80 shadow-[0_4px_12px_rgba(0,0,0,0.12)]"
    >
      <MdRefresh className="size-15 text-[#333333]" />
    </button>
  </div>
);

const SelectRow: React.FC<{ id: string; label: string; option: string }> = ({ id, label, option }) => (
  <div className="flex items-center">
    <label htmlFor={id} className="w-[413px] shrink-0 text-[42px] leading-12 font-semibold text-[#4a97f2]">{label}</label>
    <div className="relative flex-1">
      <select
        id={id}
        className="h-[103px] w-full appearance-none rounded-xl border-3 border-[#c4c6c8] bg-white pt-1 pr-24 pl-8 text-[42px] text-[#5a626b]"
      >
        <option>{option}</option>
      </select>
      <svg viewBox="0 0 36 18" className="pointer-events-none absolute top-1/2 right-[51px] h-[18px] w-9 -translate-y-1/2">
        <path d="M0 0H36L18 18Z" fill="#747474" />
      </svg>
    </div>
  </div>
);

const Step: React.FC<{ no: number; place: string }> = ({ no, place }) => (
  <div
    className={`absolute z-10 flex size-[150px] items-center justify-center rounded-full border-7 border-[#c00000] bg-white font-['Liberation_Sans',sans-serif] text-[74px] leading-none text-black ${place}`}
  >
    {no}
  </div>
);

const CARD = 'relative rounded-2xl bg-white shadow-[0_8px_28px_rgba(50,55,65,0.2)]';
const PILL = 'flex h-[87px] w-fit items-center rounded-full px-[30px] text-[45px] leading-none';
const RADIO =
  'size-[49px] shrink-0 appearance-none rounded-full border-4 border-[#c4c6c8] bg-[#eeeeee] checked:border-5 checked:border-[#343a40] checked:bg-white checked:bg-[radial-gradient(circle,#343a40_45%,#ffffff_50%)]';

const App: React.FC = () => {
  const [mode, setMode] = useState('address');
  const [address, setAddress] = useState('삼평동 633');

  return (
    <div className={`min-h-screen overflow-hidden bg-white pl-[26px] ${SANS}`}>
      <div className="flex min-h-screen flex-col bg-[#f3f4f6]">
        <header className="flex h-[113px] shrink-0 items-center rounded-tl-2xl border-b-4 border-white bg-[#23282c] pr-7 pb-1 pl-[73px]">
          <svg viewBox="0 0 44 44" className="mr-11 size-11" aria-hidden="true">
            <defs>
              <linearGradient id="frame" x1="0" y1="0" x2="1" y2="1">
                <stop offset="0" stopColor="#b0205a" />
                <stop offset="0.35" stopColor="#8a4a10" />
                <stop offset="0.65" stopColor="#5a2a90" />
                <stop offset="1" stopColor="#0f8a80" />
              </linearGradient>
            </defs>
            <rect x="1" y="1" width="42" height="42" fill="#05080c" stroke="url(#frame)" strokeWidth="2" />
            <g fill="none" stroke="#1560a8" strokeWidth="2">
              <path d="M22 32Q12 22 12 15Q13 5 22 5Q31 5 32 15Q32 22 22 32Z" />
              <path d="M16 14L22 9L28 14L25 21H19Z M19 14L24 18 M8 36L14 26 M36 36L30 26 M6 37H17 M27 37H38 M17 32L22 38L27 32" />
            </g>
          </svg>
          <h1 className="flex-1 text-[42px] leading-none text-[#d8dadb]">Seismic Hazard Map</h1>
          <button type="button" aria-label="Close" className="text-[#d0d2d3]">
            <MdClose className="size-13" />
          </button>
        </header>

        <main className="grid flex-1 grid-cols-[1696fr_1687fr] gap-[89px] pt-[86px] pl-5">
          <div className="flex flex-col gap-[86px]">
            <section className={`${CARD} z-10 px-[93px] pt-[97px] pb-[147px]`}>
              <form onSubmit={(e) => e.preventDefault()}>
                <div className="flex flex-col gap-[37px]">
                  <SelectRow id="standard" label="설계기준" option="KDS 17 10 00 :2024" />
                  <SelectRow id="period" label="재현주기" option="2,400년" />
                </div>

                <div className="mt-[109px] flex items-center justify-between">
                  <span className={`${PILL} bg-[#ebebeb] text-[#1f1f1f]`}>Graph Type</span>
                  <div className="flex gap-[106px] pt-2 text-[42px] leading-12 text-[#5a626b]">
                    <label className="flex items-center gap-[18px]">
                      <input type="radio" name="mode" className={RADIO} checked={mode === 'address'} onChange={() => setMode('address')} />
                      By Address
                    </label>
                    <label className="flex items-center gap-[18px]">
                      <input type="radio" name="mode" className={RADIO} checked={mode === 'latlng'} onChange={() => setMode('latlng')} />
                      By Latitude/Longitude
                    </label>
                  </div>
                </div>

                <div className="mt-[107px] flex items-center">
                  <label htmlFor="address" className="w-64 pt-1 text-[42px] leading-12 text-[#3f464d]">Address</label>
                  <input
                    id="address"
                    value={address}
                    onChange={(e) => setAddress(e.target.value)}
                    className="h-[103px] min-w-0 flex-1 rounded-xl border-3 border-[#c4c6c8] px-[34px] text-[42px] text-[#5a626b]"
                  />
                  <button type="submit" className="ml-28 h-[103px] w-[302px] rounded-xl border-3 border-[#22272c] bg-[#343a40] text-[42px] font-semibold text-white">
                    Search
                  </button>
                </div>

                <button type="reset" className="mt-[65px] h-[103px] w-full rounded-xl border-3 border-[#c4c6c8] bg-[#eeeeee] pt-1 text-[42px] text-[#2b3036]">
                  Reset
                </button>
              </form>

              <Step no={1} place="left-[326px] top-[69px]" />
              <Step no={2} place="left-[326px] top-[242px]" />
              <Step no={3} place="left-[505px] top-[405px]" />
              <Step no={4} place="-left-[46px] top-[605px]" />
              <Step no={4} place="right-[375px] top-[605px]" />
              <svg viewBox="0 0 168 398" className="absolute top-[757px] right-[148px] z-10 h-[398px] w-[168px]" aria-hidden="true">
                <path d="M42 0H127V313H168L84 398L0 313H42Z" fill="#c00000" />
              </svg>
            </section>

            <section className={`${CARD} flex-1 px-[93px] pt-[97px]`}>
              <Step no={5} place="-left-[34px] -top-[37px]" />
              <dl className="flex flex-col gap-[30px]">
                {RESULTS.map(({ label, value }) => (
                  <div key={label} className="flex items-start justify-between">
                    <dt className={`${PILL} bg-[#ebebeb] text-[#1f1f1f]`}>{label}</dt>
                    <dd className="text-[56px] leading-14 text-[#2b333d]">{value}</dd>
                  </div>
                ))}
                <div className="flex items-start justify-between">
                  <dt className={`${PILL} bg-[#0288d1] text-white`}>Effective ground acceleration</dt>
                  <dd className="text-[56px] leading-14 font-bold text-[#3182ce]">0.169</dd>
                </div>
              </dl>
              <div className="pointer-events-none absolute top-[73px] right-[26px] left-[71px] z-20 h-[648px]">
                <svg className="size-full" aria-hidden="true">
                  <rect
                    x="4"
                    y="4"
                    rx="24"
                    className="h-[calc(100%-8px)] w-[calc(100%-8px)]"
                    fill="none"
                    stroke="#ff0000"
                    strokeWidth="7"
                    strokeDasharray="7 7"
                  />
                </svg>
              </div>
            </section>
          </div>

          <section className={`${CARD} rounded-r-none pt-[58px] pr-[47px] pb-[53px] pl-[57px]`}>
            <HazardMap />
          </section>
        </main>
      </div>
    </div>
  );
};

export default App;
